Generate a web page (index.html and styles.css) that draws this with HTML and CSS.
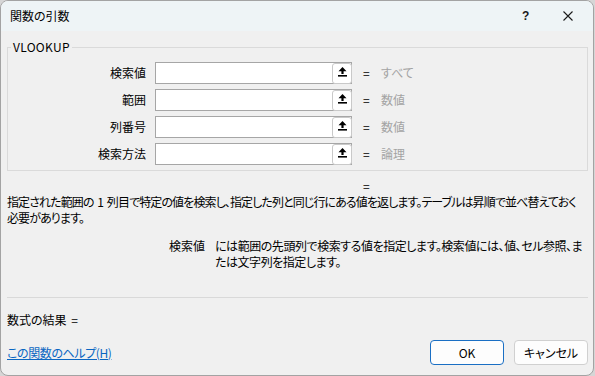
FILE: index.html
```html
<!DOCTYPE html>
<html lang="ja">
<head>
<meta charset="utf-8">
<title>関数の引数</title>
<link rel="stylesheet" href="styles.css">
</head>
<body>
<div class="window">
  <div class="titlebar">
    <span class="title">関数の引数</span>
    <span class="help">?</span>
    <span class="close"><svg width="10" height="10" viewBox="0 0 10 10"><path d="M0.5 0.5 L9.5 9.5 M9.5 0.5 L0.5 9.5" stroke="#1a1a1a" stroke-width="1.1"/></svg></span>
  </div>
  <div class="content">
    <fieldset class="group">
      <legend>VLOOKUP</legend>
      <div class="args">
        <label class="arg-label">検索値</label>
        <div class="field"><span class="field-text"></span><span class="ref-btn"><svg width="9" height="10" viewBox="0 0 9 10"><path d="M4.5 0 L8.5 4.2 L5.6 4.2 L5.6 7 L3.4 7 L3.4 4.2 L0.5 4.2 Z" fill="#000"/><rect x="0" y="8" width="9" height="1.6" fill="#000"/></svg></span></div>
        <span class="eq">=</span><span class="val">すべて</span>

        <label class="arg-label">範囲</label>
        <div class="field"><span class="field-text"></span><span class="ref-btn"><svg width="9" height="10" viewBox="0 0 9 10"><path d="M4.5 0 L8.5 4.2 L5.6 4.2 L5.6 7 L3.4 7 L3.4 4.2 L0.5 4.2 Z" fill="#000"/><rect x="0" y="8" width="9" height="1.6" fill="#000"/></svg></span></div>
        <span class="eq">=</span><span class="val">数値</span>

        <label class="arg-label">列番号</label>
        <div class="field"><span class="field-text"></span><span class="ref-btn"><svg width="9" height="10" viewBox="0 0 9 10"><path d="M4.5 0 L8.5 4.2 L5.6 4.2 L5.6 7 L3.4 7 L3.4 4.2 L0.5 4.2 Z" fill="#000"/><rect x="0" y="8" width="9" height="1.6" fill="#000"/></svg></span></div>
        <span class="eq">=</span><span class="val">数値</span>

        <label class="arg-label">検索方法</label>
        <div class="field"><span class="field-text"></span><span class="ref-btn"><svg width="9" height="10" viewBox="0 0 9 10"><path d="M4.5 0 L8.5 4.2 L5.6 4.2 L5.6 7 L3.4 7 L3.4 4.2 L0.5 4.2 Z" fill="#000"/><rect x="0" y="8" width="9" height="1.6" fill="#000"/></svg></span></div>
        <span class="eq">=</span><span class="val">論理</span>
      </div>
    </fieldset>

    <div class="result-eq">=</div>
    <p class="desc">指定された範囲の 1 列目で特定の値を検索し、指定した列と同じ行にある値を返します。テーブルは昇順で並べ替えておく<br>必要があります。</p>

    <div class="arg-help">
      <span class="arg-help-name">検索値</span>
      <span class="arg-help-text">には範囲の先頭列で検索する値を指定します。検索値には、値、セル参照、ま<br>たは文字列を指定します。</span>
    </div>

    <div class="separator"></div>

    <div class="formula-result">数式の結果 =</div>

    <div class="footer">
      <a class="help-link" href="#">この関数のヘルプ(H)</a>
      <div class="buttons">
        <button class="btn btn-primary">OK</button>
        <button class="btn">キャンセル</button>
      </div>
    </div>
  </div>
</div>
</body>
</html>
```
FILE: styles.css
```css
* { box-sizing: border-box; }
html, body { margin: 0; padding: 0; }
body {
  width: 595px;
  height: 376px;
  background: #d6d6d6;
  font-family: "Noto Sans CJK JP", "Noto Sans", sans-serif;
  font-size: 12px;
  color: #000;
  font-feature-settings: "palt";
}
.window {
  width: 594px;
  height: 376px;
  background: #f0f0f0;
  border: 1px solid #a3a3a3;
  border-radius: 8px;
  overflow: hidden;
  display: flex;
  flex-direction: column;
}
.titlebar {
  height: 30px;
  background: #eef4f6;
  display: flex;
  align-items: center;
  padding-left: 9px;
  flex-shrink: 0;
}
.title { flex: 1; font-size: 12px; line-height: 16px; }
.help {
  font-family: "Liberation Sans", sans-serif;
  font-size: 12px;
  font-weight: bold;
  color: #1a1a1a;
  width: 10px;
  margin-right: 31px;
}
.close { width: 10px; height: 10px; margin-right: 20px; display: flex; }
.content {
  padding: 0 5px 0 6px;
  display: flex;
  flex-direction: column;
  flex: 1;
}
.group {
  margin: 8px 0 0 0;
  padding: 7px 0 5px 0;
  border: 1px solid #dadada;
  min-width: 0;
}
.group legend {
  margin-left: 3px;
  padding: 0 2px;
  line-height: 16px;
  font-size: 12px;
  letter-spacing: 0.3px;
}
.args {
  display: grid;
  grid-template-columns: 147px 197px 18px auto;
  grid-auto-rows: 22px;
  row-gap: 5px;
  align-items: center;
}
.arg-label {
  text-align: right;
  padding-right: 9px;
  line-height: 16px;
  white-space: nowrap;
}
.field {
  height: 22px;
  background: #fff;
  border: 1px solid #a6a6a6;
  display: flex;
  justify-content: flex-end;
  align-items: center;
}
.field-text { flex: 1; }
.ref-btn {
  width: 20px;
  height: 21px;
  margin-right: -1px;
  border: 1px solid #c9c9c9;
  border-radius: 3px;
  background: #fff;
  display: flex;
  align-items: center;
  justify-content: center;
  padding-bottom: 2px;
}
.eq { margin-left: 11px; width: 7px; line-height: 16px; }
.val { color: #a3a3a3; margin-left: 11px; line-height: 16px; white-space: nowrap; }
.result-eq { margin: 7px 0 0 356px; line-height: 16px; }
.desc {
  margin: 0;
  line-height: 16px;
  white-space: nowrap;
  letter-spacing: -0.9px;
  word-spacing: 2px;
}
.arg-help {
  margin-top: 12px;
  display: grid;
  grid-template-columns: 198px auto;
  line-height: 16px;
}
.arg-help-name { text-align: right; white-space: nowrap; }
.arg-help-text { padding-left: 10px; white-space: nowrap; letter-spacing: -0.45px; }
.separator { height: 1px; background: #d9d9d9; margin-top: 27px; flex-shrink: 0; }
.formula-result { margin-top: 14px; line-height: 16px; word-spacing: 2px; }
.footer {
  margin-top: 12px;
  display: flex;
  align-items: center;
  justify-content: space-between;
}
.help-link {
  color: #0a66c2;
  text-decoration: underline;
  line-height: 16px;
  white-space: nowrap;
  letter-spacing: -0.4px;
}
.buttons { display: flex; gap: 10px; }
.btn {
  width: 74px;
  height: 25px;
  font-family: "Noto Sans CJK JP", "Noto Sans", sans-serif;
  font-feature-settings: "palt";
  font-size: 12px;
  color: #000;
  background: #fdfdfd;
  border: 1px solid #d0d0d0;
  border-radius: 4px;
  padding: 0;
}
.btn-primary { border: 1px solid #1a6fc4; }
```
